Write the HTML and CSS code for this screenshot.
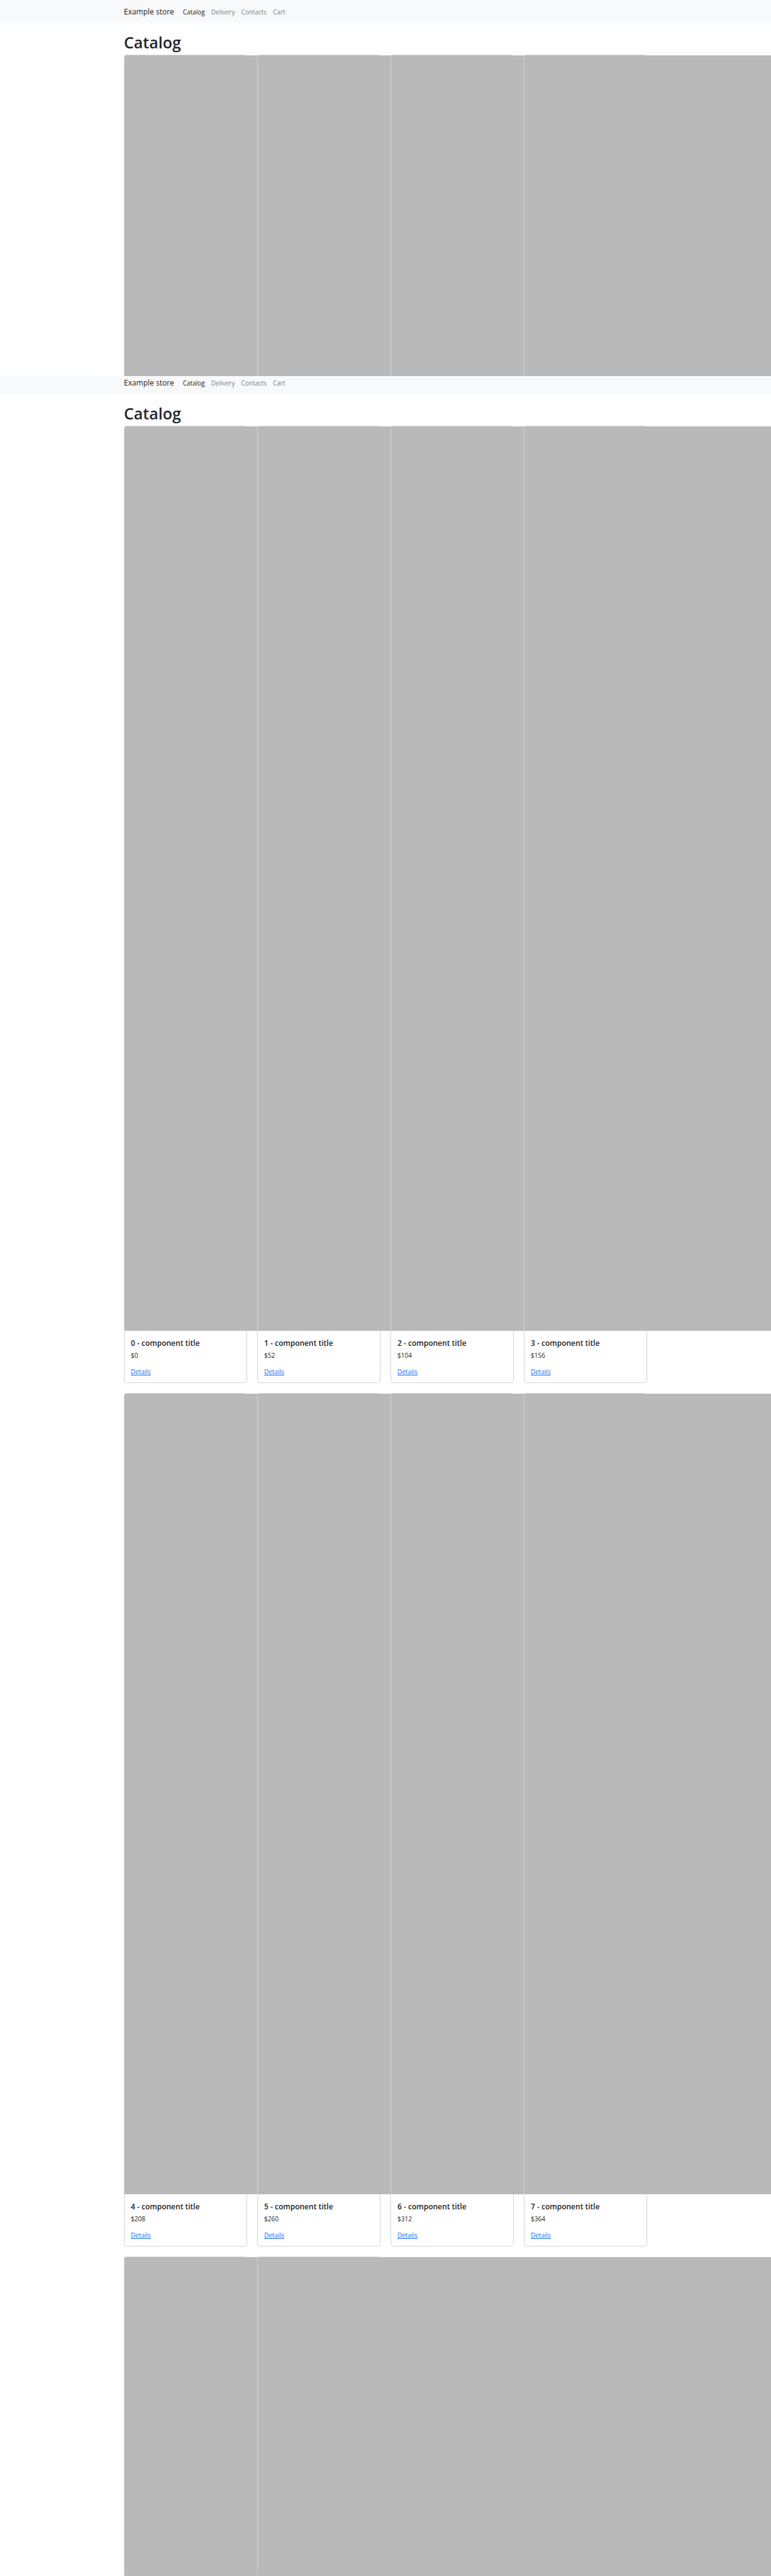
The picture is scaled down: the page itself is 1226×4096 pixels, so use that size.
FILE: index.html
```html
<!DOCTYPE html>
<html lang="en">
<head>
<meta charset="utf-8">
<title>Example store</title>
<link rel="stylesheet" href="styles.css">
</head>
<body>
<section class="screen screen-preview">
  <nav class="navbar">
    <div class="container navbar-inner">
      <a class="brand" href="#">Example store</a>
      <a class="nav-link active" href="#">Catalog</a>
      <a class="nav-link" href="#">Delivery</a>
      <a class="nav-link" href="#">Contacts</a>
      <a class="nav-link" href="#">Cart</a>
    </div>
  </nav>
  <main class="container">
    <h1>Catalog</h1>
    <div class="cards">
      <article class="card"><div class="card-img"></div></article>
      <article class="card"><div class="card-img"></div></article>
      <article class="card"><div class="card-img"></div></article>
      <article class="card"><div class="card-img"></div></article>
    </div>
  </main>
</section>
<section class="screen screen-full">
  <nav class="navbar navbar-scrolled">
    <div class="container navbar-inner">
      <a class="brand" href="#">Example store</a>
      <a class="nav-link active" href="#">Catalog</a>
      <a class="nav-link" href="#">Delivery</a>
      <a class="nav-link" href="#">Contacts</a>
      <a class="nav-link" href="#">Cart</a>
    </div>
  </nav>
  <main class="container">
    <h1>Catalog</h1>
    <div class="cards">
      <article class="card"><div class="card-img tall"></div><div class="card-body"><h2>0 - component title</h2><p>$0</p><a href="#">Details</a></div></article>
      <article class="card"><div class="card-img tall"></div><div class="card-body"><h2>1 - component title</h2><p>$52</p><a href="#">Details</a></div></article>
      <article class="card"><div class="card-img tall"></div><div class="card-body"><h2>2 - component title</h2><p>$104</p><a href="#">Details</a></div></article>
      <article class="card"><div class="card-img tall"></div><div class="card-body"><h2>3 - component title</h2><p>$156</p><a href="#">Details</a></div></article>
      <article class="card"><div class="card-img"></div><div class="card-body"><h2>4 - component title</h2><p>$208</p><a href="#">Details</a></div></article>
      <article class="card"><div class="card-img"></div><div class="card-body"><h2>5 - component title</h2><p>$260</p><a href="#">Details</a></div></article>
      <article class="card"><div class="card-img"></div><div class="card-body"><h2>6 - component title</h2><p>$312</p><a href="#">Details</a></div></article>
      <article class="card"><div class="card-img"></div><div class="card-body"><h2>7 - component title</h2><p>$364</p><a href="#">Details</a></div></article>
      <article class="card card-open"><div class="card-img short"></div></article>
      <article class="card card-open"><div class="card-img short"></div></article>
    </div>
  </main>
</section>
</body>
</html>
```
FILE: styles.css
```css
* { box-sizing: border-box; }
body {
  margin: 0;
  background: #fff;
  color: #212529;
  font: 10px/16px "Open Sans", "Noto Sans", sans-serif;
}
.screen { overflow: hidden; }
.screen-preview { height: 598px; }
.container { max-width: 832px; margin: 0 auto; }
.navbar { background: #f8f9fa; padding: 9px 0 7px; }
.navbar-scrolled { padding-top: 1px; }
.navbar-inner { display: flex; align-items: center; gap: 10px; height: 20px; }
.navbar a { text-decoration: none; }
.navbar .brand { font-size: 12px; color: #1a1d20; margin-right: 4px; }
.nav-link { color: #7b7d7e; }
.nav-link.active { color: #1a1d20; }
h1 {
  margin: 0;
  padding: 16px 0 4px;
  font-size: 25px;
  line-height: 31px;
  font-weight: 600;
}
.cards {
  display: grid;
  grid-template-columns: repeat(4, minmax(0, 1fr));
  gap: 16px;
}
.card {
  min-width: 0;
  border: 1px solid #d3d4d4;
  border-radius: 4px;
}
.card-img {
  width: 100vw;
  height: 1273px;
  background: #b9b9b9;
  border-top-left-radius: 3px;
}
.card-img.tall { height: 1438px; }
.card-img.short { height: 507px; border-radius: 0; }
.card-open { border-bottom: 0; }
.card-body { padding: 12px 10px 9px; }
.card-body h2 {
  margin: 0;
  font-size: 12px;
  line-height: 16px;
  font-weight: 600;
}
.card-body p { margin: 3px 0 10px; }
.card-body a { display: inline-block; vertical-align: top; color: #0d6efd; }
```
